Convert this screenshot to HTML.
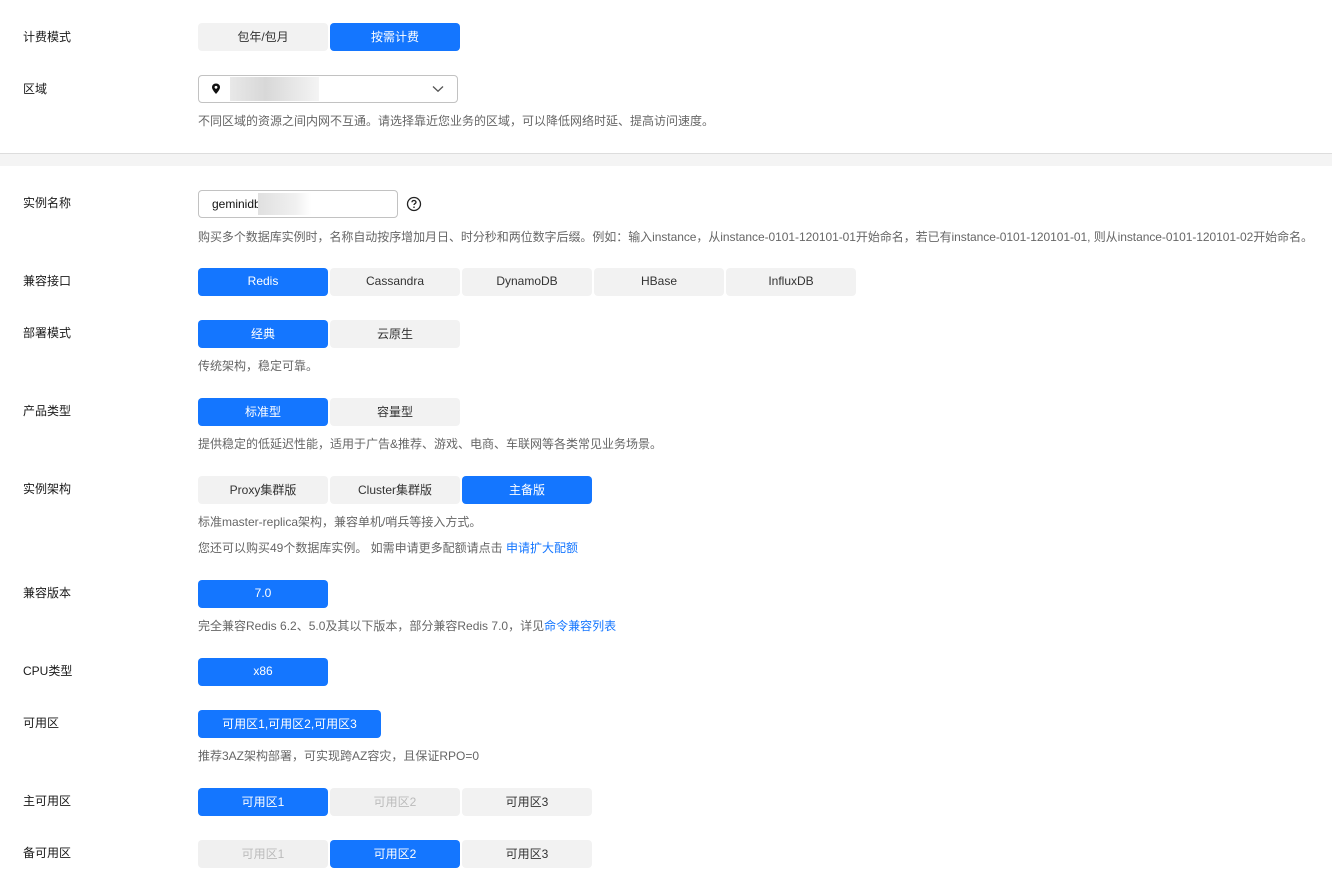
<!DOCTYPE html>
<html><head><meta charset="utf-8"><style>
*{margin:0;padding:0;box-sizing:border-box}
body{width:1332px;height:890px;background:#fff;position:relative;overflow:hidden;font-family:"Liberation Sans","Noto Sans CJK SC",sans-serif;font-size:12px;color:#191919}
.a{position:absolute}
.lab{position:absolute;left:23px;color:#191919;font-size:12px;line-height:14px}
.hint{position:absolute;left:198px;color:#666;font-size:12px;line-height:14px;white-space:nowrap}
.g{position:absolute;height:28px;display:flex;gap:2px;left:198px}
.b{width:130px;height:28px;border-radius:4px;background:#f2f2f2;color:#333;display:flex;align-items:center;justify-content:center;font-size:12px;padding-bottom:2px}
.b.on{background:#1476ff;color:#fff}
.b.dis{background:#f0f0f0;color:#bbb}
a{color:#1476ff;text-decoration:none}
</style></head><body>
<div class="lab" style="top:30px">计费模式</div>
<div class="g" style="top:23px"><div class="b">包年/包月</div><div class="b on">按需计费</div></div>
<div class="lab" style="top:82px">区域</div>
<div class="a" style="left:198px;top:75px;width:260px;height:28px;border:1px solid #c2c2c2;border-radius:4px">
<svg class="a" style="left:12px;top:7px" width="10" height="12" viewBox="0 0 10 12"><path d="M5 0.5C2.6 0.5 1 2.2 1 4.3 1 7 5 11 5 11S9 7 9 4.3C9 2.2 7.4 0.5 5 0.5Z" fill="#111"/><circle cx="5" cy="4.3" r="1.4" fill="#fff"/></svg>
<div class="a" style="left:31px;top:1px;width:89px;height:24px;background:linear-gradient(90deg,#e8e8e8,#d8d8d8 40%,#f4f4f4)"></div>
<svg class="a" style="left:233px;top:9px" width="12" height="8" viewBox="0 0 12 8"><path d="M1 1.5L6 6.2 11 1.5" stroke="#555" stroke-width="1.3" fill="none"/></svg>
</div>
<div class="hint" style="top:114px">不同区域的资源之间内网不互通。请选择靠近您业务的区域，可以降低网络时延、提高访问速度。</div>
<div class="a" style="left:0;top:153px;width:1332px;height:13px;background:#f4f4f4;border-top:1px solid #ddd"></div>
<div class="lab" style="top:196px">实例名称</div>
<div class="a" style="left:198px;top:190px;width:200px;height:28px;border:1px solid #c2c2c2;border-radius:4px">
<span class="a" style="left:13px;top:6px;font-size:12px;color:#111">geminidb</span>
<div class="a" style="left:59px;top:2px;width:53px;height:22px;background:linear-gradient(90deg,#e0e0e0,#f0f0f0 70%,#fff)"></div>
</div>
<svg class="a" style="left:406px;top:196px" width="16" height="16" viewBox="0 0 16 16"><circle cx="8" cy="8" r="6.5" stroke="#222" stroke-width="1.3" fill="none"/><path d="M6 6.3C6 5.1 6.9 4.5 8 4.5S10 5.2 10 6.2C10 7.5 8 7.6 8 9" stroke="#222" stroke-width="1.3" fill="none"/><circle cx="8" cy="11.2" r="0.8" fill="#222"/></svg>
<div class="hint" style="top:230px;letter-spacing:-0.05px">购买多个数据库实例时，名称自动按序增加月日、时分秒和两位数字后缀。例如：输入instance，从instance-0101-120101-01开始命名，若已有instance-0101-120101-01, 则从instance-0101-120101-02开始命名。</div>
<div class="lab" style="top:274px">兼容接口</div>
<div class="g" style="top:268px"><div class="b on">Redis</div><div class="b">Cassandra</div><div class="b">DynamoDB</div><div class="b">HBase</div><div class="b">InfluxDB</div></div>
<div class="lab" style="top:326px">部署模式</div>
<div class="g" style="top:320px"><div class="b on">经典</div><div class="b">云原生</div></div>
<div class="hint" style="top:359px">传统架构，稳定可靠。</div>
<div class="lab" style="top:404px">产品类型</div>
<div class="g" style="top:398px"><div class="b on">标准型</div><div class="b">容量型</div></div>
<div class="hint" style="top:437px">提供稳定的低延迟性能，适用于广告&amp;推荐、游戏、电商、车联网等各类常见业务场景。</div>
<div class="lab" style="top:482px">实例架构</div>
<div class="g" style="top:476px"><div class="b">Proxy集群版</div><div class="b">Cluster集群版</div><div class="b on">主备版</div></div>
<div class="hint" style="top:515px">标准master-replica架构，兼容单机/哨兵等接入方式。</div>
<div class="hint" style="top:541px">您还可以购买49个数据库实例。 如需申请更多配额请点击 <a>申请扩大配额</a></div>
<div class="lab" style="top:586px">兼容版本</div>
<div class="g" style="top:580px"><div class="b on">7.0</div></div>
<div class="hint" style="top:619px">完全兼容Redis 6.2、5.0及其以下版本，部分兼容Redis 7.0，详见<a>命令兼容列表</a></div>
<div class="lab" style="top:664px">CPU类型</div>
<div class="g" style="top:658px"><div class="b on">x86</div></div>
<div class="lab" style="top:716px">可用区</div>
<div class="g" style="top:710px"><div class="b on" style="width:183px">可用区1,可用区2,可用区3</div></div>
<div class="hint" style="top:749px">推荐3AZ架构部署，可实现跨AZ容灾，且保证RPO=0</div>
<div class="lab" style="top:794px">主可用区</div>
<div class="g" style="top:788px"><div class="b on">可用区1</div><div class="b dis">可用区2</div><div class="b">可用区3</div></div>
<div class="lab" style="top:846px">备可用区</div>
<div class="g" style="top:840px"><div class="b dis">可用区1</div><div class="b on">可用区2</div><div class="b">可用区3</div></div>
</body></html>
